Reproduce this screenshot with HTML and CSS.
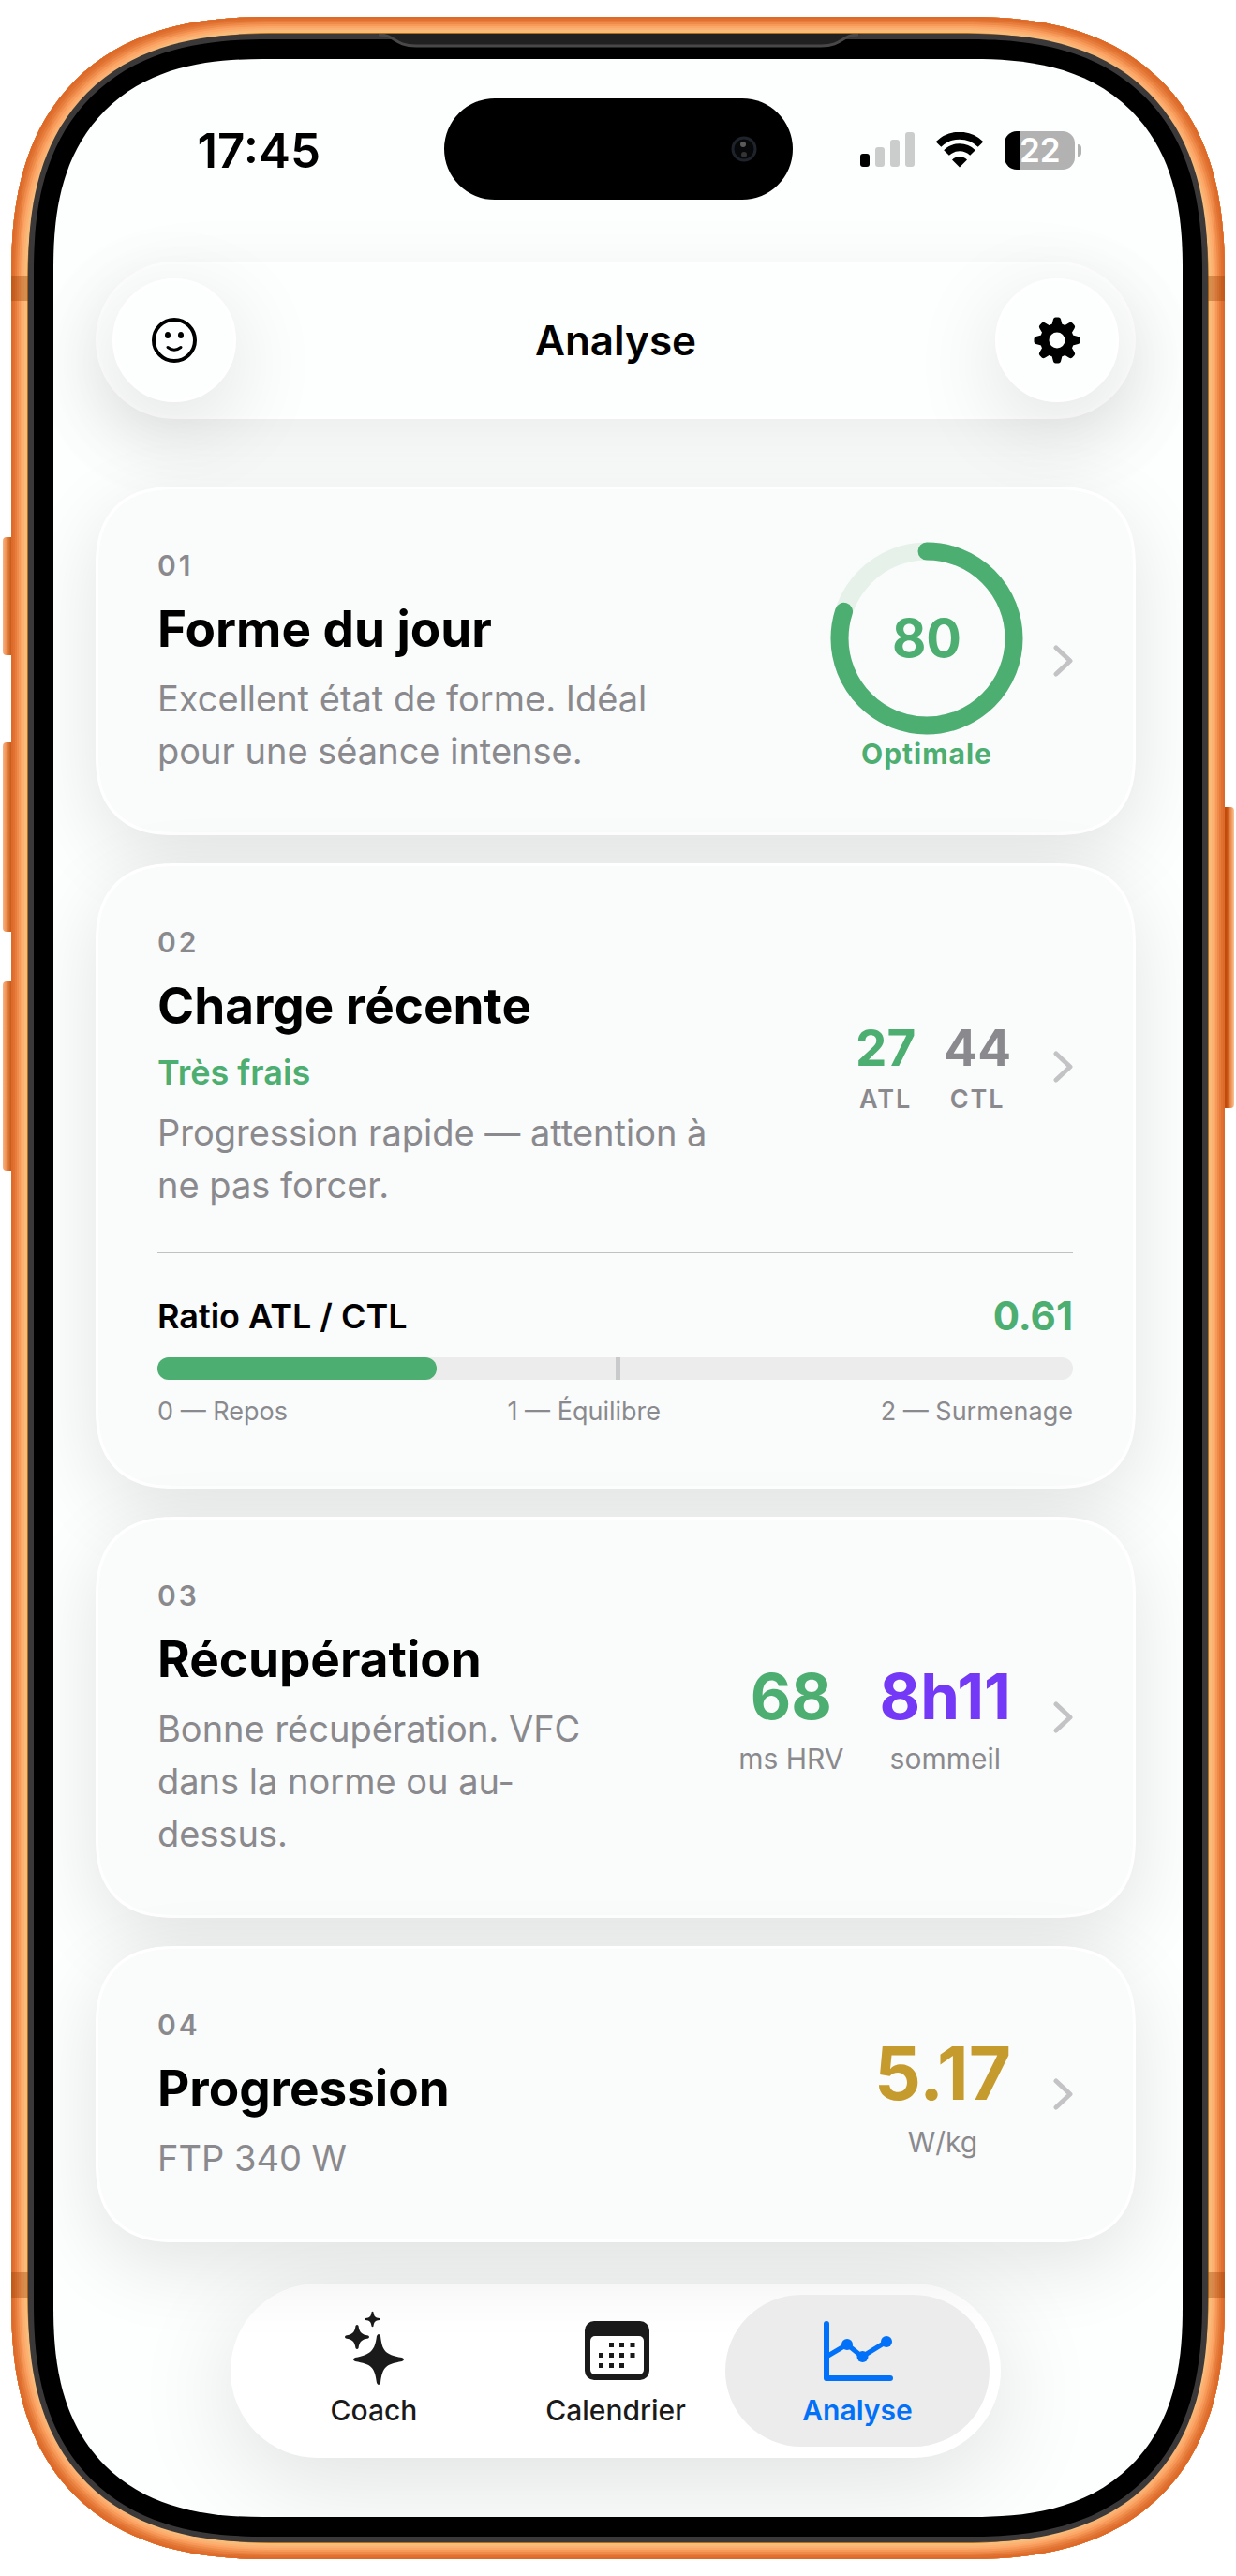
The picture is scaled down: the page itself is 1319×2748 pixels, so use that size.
FILE: index.html
```html
<!DOCTYPE html>
<html lang="fr">
<head>
	<meta charset="UTF-8">
	<meta name="viewport" content="width=device-width, initial-scale=1">
	<title>Analyse</title>
	<link rel="stylesheet" href="styles.css">
</head>
<body>
	<div class="phone">
		<!-- side buttons -->
		<span class="key key-action"></span>
		<span class="key key-up"></span>
		<span class="key key-down"></span>
		<span class="key key-power"></span>
		<span class="band band-tl"></span>
		<span class="band band-tr"></span>
		<span class="band band-bl"></span>
		<span class="band band-br"></span>

		<div class="bezel">
			<svg class="speaker" viewBox="0 0 520 18" width="520" height="18">
				<path d="M0 0 C22 0 20 13 44 13 H476 C500 13 498 0 520 0 Z" fill="#202020"/>
				<path d="M4 1 C22 1 20 13 44 13 H476 C500 13 498 1 516 1" fill="none" stroke="#484848" stroke-width="3"/>
			</svg>
			<div class="glass">
				<div class="screen">

					<div class="status-bar">
						<div class="status-time">17:45</div>
						<div class="island">
							<svg viewBox="0 0 28 28" width="28" height="28">
								<circle cx="14" cy="14" r="12" fill="#07080a" stroke="#1f232b" stroke-width="3"/>
								<circle cx="13" cy="9" r="3" fill="#5a5a5a"/>
								<circle cx="14" cy="20" r="3" fill="#343434"/>
							</svg>
						</div>
						<div class="status-icons">
							<svg viewBox="0 0 58 38" width="58" height="38">
								<rect x="0" y="23" width="10" height="14" rx="3" fill="#000"/>
								<rect x="16" y="16" width="10" height="21" rx="3" fill="#cbcccc"/>
								<rect x="32" y="8" width="10" height="29" rx="3" fill="#cbcccc"/>
								<rect x="48" y="0" width="10" height="37" rx="3" fill="#cbcccc"/>
							</svg>
							<svg viewBox="0 0 52 38" width="52" height="38">
								<path d="M3.5 13 A32 32 0 0 1 48.500 13" fill="none" stroke="#000" stroke-width="8"/>
								<path d="M12 22 A20 20 0 0 1 40 22" fill="none" stroke="#000" stroke-width="8"/>
								<path d="M18 29.500 A11.500 11.500 0 0 1 34 29.500 L26 37.500 Z" fill="#000"/>
							</svg>
							<div class="battery"><span>22</span></div>
						</div>
					</div>

					<div class="app">
						<header class="top-bar">
							<button class="round-btn" type="button" aria-label="Profil">
								<svg viewBox="0 0 48 48" width="48" height="48">
									<circle cx="24" cy="24" r="22" fill="none" stroke="#000" stroke-width="4"/>
									<ellipse cx="17" cy="18.500" rx="3" ry="3.500"/>
									<ellipse cx="31" cy="18.500" rx="3" ry="3.500"/>
									<path d="M17 31.500 Q24 37 31 31.500" fill="none" stroke="#000" stroke-width="3" stroke-linecap="round"/>
								</svg>
							</button>
							<h1>Analyse</h1>
							<button class="round-btn" type="button" aria-label="Réglages">
								<svg viewBox="0 0 50 50" width="50" height="50">
									<path id="tooth" d="M18.500 12 L21 2.500 Q21.500 .5 23.500 .5 H26.500 Q28.500 .5 29 2.500 L31.500 12 V38 L29 47.500 Q28.500 49.500 26.500 49.500 H23.500 Q21.500 49.500 21 47.500 L18.500 38 Z"/>
									<use href="#tooth" transform="rotate(45 25 25)"/>
									<use href="#tooth" transform="rotate(90 25 25)"/>
									<use href="#tooth" transform="rotate(135 25 25)"/>
									<circle cx="25" cy="25" r="18"/>
									<circle cx="25" cy="25" r="8.500" fill="#fdfefe"/>
								</svg>
							</button>
						</header>

						<main class="cards">
							<a class="card" href="#forme">
								<div class="card-row">
									<div class="card-text">
										<span class="num">01</span>
										<h2>Forme du jour</h2>
										<p>Excellent état de forme. Idéal<br>pour une séance intense.</p>
									</div>
									<div class="score">
										<div class="ring">
											<svg viewBox="0 0 186 186" width="186" height="186">
												<circle cx="93" cy="93" r="93" fill="none" stroke="#e6f1ea" stroke-width="19"/>
												<circle cx="93" cy="93" r="93" fill="none" stroke="#4cae71" stroke-width="19" stroke-linecap="round" pathLength="100" stroke-dasharray="80 100" transform="rotate(-90 93 93)"/>
											</svg>
											<strong>80</strong>
										</div>
										<span class="score-label">Optimale</span>
									</div>
									<svg class="chevron" viewBox="0 0 21 34" width="21" height="34"><path d="M3 3 L18 17 L3 31"/></svg>
								</div>
							</a>

							<a class="card" href="#charge">
								<div class="card-row">
									<div class="card-text">
										<span class="num">02</span>
										<h2>Charge récente</h2>
										<span class="state">Très frais</span>
										<p>Progression rapide — attention à<br>ne pas forcer.</p>
									</div>
									<div class="stats stats-load">
										<div class="stat"><strong class="green">27</strong><span>ATL</span></div>
										<div class="stat"><strong class="grey">44</strong><span>CTL</span></div>
									</div>
									<svg class="chevron" viewBox="0 0 21 34" width="21" height="34"><path d="M3 3 L18 17 L3 31"/></svg>
								</div>
								<div class="ratio">
									<div class="ratio-head">
										<span>Ratio ATL / CTL</span>
										<strong>0.61</strong>
									</div>
									<div class="bar"><div class="bar-fill" style="width: 30.5%"></div></div>
									<div class="ratio-scale">
										<span>0 — Repos</span>
										<span>1 — Équilibre</span>
										<span>2 — Surmenage</span>
									</div>
								</div>
							</a>

							<a class="card" href="#recuperation">
								<div class="card-row">
									<div class="card-text">
										<span class="num">03</span>
										<h2>Récupération</h2>
										<p>Bonne récupération. VFC<br>dans la norme ou au-<br>dessus.</p>
									</div>
									<div class="stats stats-rest">
										<div class="stat"><strong class="green">68</strong><span>ms HRV</span></div>
										<div class="stat"><strong class="purple">8h11</strong><span>sommeil</span></div>
									</div>
									<svg class="chevron" viewBox="0 0 21 34" width="21" height="34"><path d="M3 3 L18 17 L3 31"/></svg>
								</div>
							</a>

							<a class="card" href="#progression">
								<div class="card-row">
									<div class="card-text">
										<span class="num">04</span>
										<h2>Progression</h2>
										<p>FTP 340 W</p>
									</div>
									<div class="stats stats-power">
										<div class="stat"><strong class="gold">5.17</strong><span>W/kg</span></div>
									</div>
									<svg class="chevron" viewBox="0 0 21 34" width="21" height="34"><path d="M3 3 L18 17 L3 31"/></svg>
								</div>
							</a>
						</main>

						<nav class="tabs">
							<a class="tab" href="#coach">
								<svg viewBox="0 0 80 80" width="80" height="80" fill="#1a1a1a">
									<path d="M43 28 Q45 24 47 28 C49 43 51 48 70 51 Q74 53 70 55 C53 58 49 61 47 78 Q45 82 43 78 C41 61 37 58 20 55 Q16 53 20 51 C37 48 41 43 43 28 Z"/>
									<path d="M20.500 17 Q22 15 23.500 17 C24.500 24 27 26.500 34 27.500 Q36 29 34 30.500 C27 31.500 24.500 34 23.500 41 Q22 43 20.500 41 C19.500 34 17 31.500 10 30.500 Q8 29 10 27.500 C17 26.500 19.500 24 20.500 17 Z"/>
									<path d="M37.500 2.500 Q38.500 1 39.500 2.500 C40 7 41.500 8.500 46 9 Q47.500 10 46 11 C41.500 11.500 40 13 39.500 17.500 Q38.500 19 37.500 17.500 C37 13 35.500 11.500 31 11 Q29.500 10 31 9 C35.500 8.500 37 7 37.500 2.500 Z"/>
								</svg>
								<span>Coach</span>
							</a>
							<a class="tab" href="#calendrier">
								<svg viewBox="0 0 80 80" width="80" height="80" fill="#1a1a1a">
									<rect x="7" y="12" width="69" height="63" rx="10"/>
									<rect x="13" y="28" width="57" height="41" rx="5" fill="#fff"/>
									<path d="M33 35h5v5h-5zM44 35h5v5h-5zM55.500 35h5v5h-5zM22 46h5v5h-5zM33 46h5v5h-5zM44 46h5v5h-5zM55.500 46h5v5h-5zM22 57h5v5h-5zM33 57h5v5h-5zM44 57h5v5h-5z"/>
								</svg>
								<span>Calendrier</span>
							</a>
							<a class="tab active" href="#analyse">
								<svg viewBox="0 0 80 80" width="80" height="80" fill="none" stroke="#0071f8" stroke-linecap="round" stroke-linejoin="round">
									<path d="M7 15 V73 H75" stroke-width="6"/>
									<path d="M7 50 L29 37 L45 50 L71 34" stroke-width="5"/>
									<g fill="#0071f8" stroke="none">
										<circle cx="29" cy="37" r="6"/>
										<circle cx="45.500" cy="50" r="6"/>
										<circle cx="71" cy="34" r="6"/>
									</g>
								</svg>
								<span>Analyse</span>
							</a>
						</nav>
					</div>

				</div>
			</div>
		</div>
	</div>
</body>
</html>
```

FILE: styles.css
```css
* {
	box-sizing: border-box;
}

body {
	margin: 0;
	padding: 18px 12px;
	background-color: #fff;
	font-family: Inter, "Liberation Sans", sans-serif;
	color: #000;
}

h1, h2, p {
	margin: 0;
}

a {
	color: inherit;
	text-decoration: none;
}

svg {
	display: block;
	flex: none;
}

/* device */
.phone {
	position: relative;
	padding: 18px;
	border-radius: 231px;
	background-color: #b0701f;
	box-shadow:
		inset 0 0 0 2px #dd6a28,
		inset 0 0 0 4px #e07130,
		inset 0 0 0 6px #e67d3c,
		inset 0 0 0 8px #ee8b4a,
		inset 0 0 0 10px #f79959,
		inset 0 0 0 12px #fca767,
		inset 0 0 0 14px #fbb171,
		inset 0 0 0 17px #f8bb79;
}

.bezel {
	position: relative;
	padding: 6px;
	border-radius: 213px;
	background-color: #3a3838;
}

.glass {
	padding: 21px;
	border-radius: 207px;
	background-color: #000;
}

.screen {
	padding: 42px 0 63px;
	border-radius: 186px;
	background-color: #fdfefe;
	overflow: hidden;
}

.speaker {
	position: absolute;
	top: 0;
	left: 50%;
	transform: translateX(-50%);
}

.key {
	position: absolute;
	left: -9px;
	width: 9px;
	border-radius: 4px 0 0 4px;
	background: linear-gradient(to right, #f9b282, #e98747 50%, #c45a18);
}

.key-action {
	top: 555px;
	height: 126px;
}

.key-up {
	top: 774px;
	height: 202px;
}

.key-down {
	top: 1029px;
	height: 202px;
}

.key-power {
	top: 843px;
	left: auto;
	right: -10px;
	width: 10px;
	height: 321px;
	border-radius: 0 4px 4px 0;
	background: linear-gradient(to left, #fcc498, #e98747 40%, #bf4c0d 80%);
}

.band {
	position: absolute;
	width: 18px;
	height: 27px;
	background-color: rgba(150, 60, 0, 0.35);
}

.band-tl {
	top: 276px;
	left: 0;
}

.band-tr {
	top: 276px;
	right: 0;
}

.band-bl {
	bottom: 279px;
	left: 0;
}

.band-br {
	bottom: 279px;
	right: 0;
}

/* status bar */
.status-bar {
	display: grid;
	grid-template-columns: 1fr 372px 1fr;
	align-items: center;
}

.status-time {
	padding: 2px 0 0 22px;
	font-size: 51px;
	font-weight: 600;
	text-align: center;
}

.island {
	display: flex;
	align-items: center;
	justify-content: flex-end;
	height: 108px;
	padding-right: 38px;
	border-radius: 54px;
	background-color: #000;
}

.status-icons {
	display: flex;
	align-items: center;
	justify-content: center;
	gap: 22px;
	padding: 2px 35px 0 0;
}

.battery {
	position: relative;
	display: flex;
	align-items: center;
	justify-content: center;
	width: 75px;
	height: 41px;
	margin-right: 7px;
	border-radius: 13px;
	background: linear-gradient(to right, #000 17px, #b2b2b2 17px);
	color: #fff;
	font-size: 35px;
	font-weight: 600;
}

.battery::after {
	content: "";
	position: absolute;
	top: 14px;
	right: -7px;
	width: 4px;
	height: 13px;
	border-radius: 0 4px 4px 0;
	background-color: #b2b2b2;
}

/* app */
.app {
	padding: 66px 50px 0 45px;
}

.top-bar {
	display: flex;
	align-items: center;
	justify-content: space-between;
	height: 168px;
	padding: 0 15px;
	border: 3px solid #fff;
	border-radius: 84px;
	background-color: #fdfefe;
	box-shadow: 0 24px 84px rgba(0, 0, 0, 0.08);
}

h1 {
	font-size: 44px;
	font-weight: 600;
}

.round-btn {
	display: flex;
	align-items: center;
	justify-content: center;
	width: 132px;
	height: 132px;
	padding: 0;
	border: 3px solid #fff;
	border-radius: 50%;
	background-color: #fdfefe;
	box-shadow: 0 24px 96px rgba(0, 0, 0, 0.12);
}

.cards {
	display: flex;
	flex-direction: column;
	gap: 30px;
	margin-top: 72px;
}

.card {
	display: block;
	padding: 59px 64px 59px 63px;
	border: 3px solid #fff;
	border-radius: 72px;
	background-color: #fafbfb;
	box-shadow: 0 24px 84px rgba(0, 0, 0, 0.11);
}

.card-row {
	display: flex;
	align-items: center;
	gap: 42px;
}

.card-text {
	display: flex;
	flex: 1;
	flex-direction: column;
	gap: 11px;
}

.num {
	font-size: 30px;
	font-weight: 600;
	line-height: 44px;
	letter-spacing: 3px;
	color: #8a8a8e;
}

h2 {
	font-size: 53px;
	font-weight: 700;
	line-height: 70px;
}

.state {
	font-size: 36px;
	font-weight: 600;
	line-height: 50px;
	color: #4cae71;
}

.card-text p {
	font-size: 38px;
	line-height: 56px;
	color: #8a8a8e;
}

.score {
	display: flex;
	flex-direction: column;
	align-items: center;
	gap: 12px;
}

.ring {
	display: grid;
	place-items: center;
}

.ring > * {
	grid-area: 1 / 1;
}

.ring svg {
	overflow: visible;
}

.ring strong {
	font-size: 56px;
	font-weight: 700;
	color: #4cae71;
}

.score-label {
	font-size: 30px;
	font-weight: 700;
	line-height: 36px;
	letter-spacing: 1px;
	color: #4cae71;
}

.stats {
	display: flex;
	margin-right: 3px;
}

.stat {
	display: flex;
	flex-direction: column;
	align-items: center;
	gap: 8px;
	color: #8a8a8e;
}

.stats-load {
	gap: 30px;
}

.stats-load strong {
	font-size: 53px;
	line-height: 62px;
}

.stats-load span {
	font-size: 27px;
	font-weight: 600;
	line-height: 32px;
	letter-spacing: 2px;
}

.stats-rest {
	gap: 38px;
}

.stats-rest strong {
	font-size: 67px;
	line-height: 80px;
}

.stats-rest span,
.stats-power span {
	font-size: 30px;
	line-height: 36px;
}

.stats-power strong {
	font-size: 78px;
	line-height: 94px;
}

.green {
	color: #4cae71;
}

.grey {
	color: #8a8a8e;
}

.purple {
	color: #7439f6;
}

.gold {
	color: #c69b2e;
}

.chevron path {
	fill: none;
	stroke: #c3c3c5;
	stroke-width: 5;
	stroke-linecap: round;
	stroke-linejoin: round;
}

.ratio {
	margin-top: 44px;
	padding: 41px 0 4px;
	border-top: 1px solid #c0c1c3;
}

.ratio-head {
	display: flex;
	align-items: center;
	justify-content: space-between;
	line-height: 52px;
	font-size: 36px;
	font-weight: 600;
}

.ratio-head strong {
	font-size: 42px;
	font-weight: 700;
	color: #4cae71;
}

.bar {
	height: 24px;
	margin: 18px 0;
	border-radius: 12px;
	background: linear-gradient(#c9cacb, #c9cacb) calc(50% + 3px) 0 / 5px 100% no-repeat #ebeceb;
}

.bar-fill {
	height: 100%;
	border-radius: 12px;
	background-color: #4cae71;
}

.ratio-scale {
	display: flex;
	justify-content: space-between;
	font-size: 27px;
	line-height: 32px;
	color: #8a8a8e;
}

/* tabs */
.tabs {
	display: flex;
	width: fit-content;
	margin: 44px auto 0;
	padding: 12px;
	border-radius: 93px;
	background-color: #fff;
	box-shadow: 0 24px 108px rgba(0, 0, 0, 0.12);
}

.tab {
	display: flex;
	flex-direction: column;
	align-items: center;
	gap: 9px;
	width: 282px;
	height: 162px;
	padding-top: 16px;
	border-radius: 81px;
	font-size: 30px;
	font-weight: 500;
	line-height: 36px;
	color: #1a1a1a;
}

.tab + .tab {
	margin-left: -24px;
}

.tab.active {
	background-color: #ebeceb;
	color: #0071f8;
	font-weight: 600;
}

/* smoother corners where the browser can draw them */
@supports (corner-shape: squircle) {
	.phone,
	.bezel,
	.glass,
	.screen,
	.card {
		corner-shape: superellipse(1.3);
	}

	.phone {
		border-radius: 277px;
	}

	.bezel {
		border-radius: 257px;
	}

	.glass {
		border-radius: 250px;
	}

	.screen {
		border-radius: 224px;
	}

	.card {
		border-radius: 86px;
	}
}
```
